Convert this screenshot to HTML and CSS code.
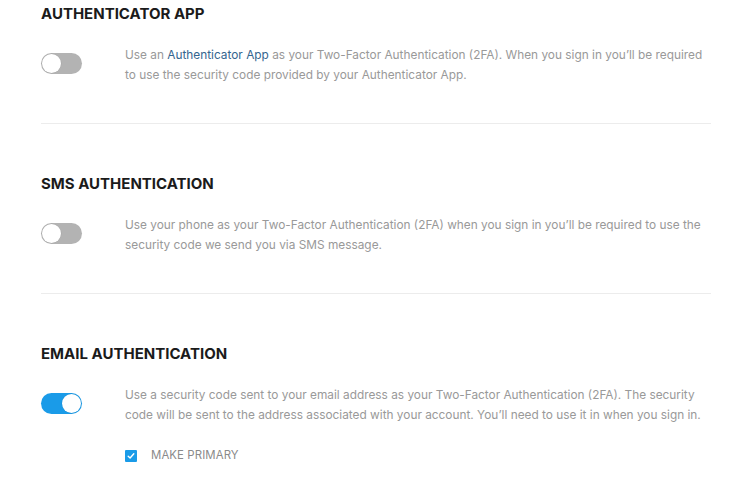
FILE: index.html
```html
<!DOCTYPE html>
<html>
<head>
<meta charset="utf-8">
<link rel="stylesheet" href="styles.css">
</head>
<body>
<div class="page">
  <section class="section">
    <h2 class="title">AUTHENTICATOR APP</h2>
    <div class="row">
      <div class="toggle"><span class="knob"></span></div>
      <p class="desc">Use an <a class="link">Authenticator App</a> as your Two-Factor Authentication (2FA). When you sign in you’ll be required to use the security code provided by your Authenticator App.</p>
    </div>
  </section>
  <div class="divider"></div>
  <section class="section">
    <h2 class="title">SMS AUTHENTICATION</h2>
    <div class="row">
      <div class="toggle"><span class="knob"></span></div>
      <p class="desc">Use your phone as your Two-Factor Authentication (2FA) when you sign in you’ll be required to use the security code we send you via SMS message.</p>
    </div>
  </section>
  <div class="divider"></div>
  <section class="section">
    <h2 class="title">EMAIL AUTHENTICATION</h2>
    <div class="row">
      <div class="toggle on"><span class="knob"></span></div>
      <div class="col">
        <p class="desc">Use a security code sent to your email address as your Two-Factor Authentication (2FA). The security code will be sent to the address associated with your account. You’ll need to use it in when you sign in.</p>
        <label class="check">
          <span class="box"><svg width="8" height="8" viewBox="0 0 8 8"><path d="M1.2 4.2 L3.1 6 L6.8 1.8" fill="none" stroke="#fff" stroke-width="1.4" stroke-linecap="round" stroke-linejoin="round"/></svg></span>
          <span class="check-label">MAKE PRIMARY</span>
        </label>
      </div>
    </div>
  </section>
</div>
</body>
</html>
```
FILE: styles.css
```css
html, body {
  margin: 0;
  padding: 0;
  background: #ffffff;
}
body {
  font-family: Inter, "Noto Sans", sans-serif;
}
.page {
  padding: 4px 30px 0 41px;
}
.section {
  display: flex;
  flex-direction: column;
}
.title {
  margin: 0;
  font-size: 15px;
  line-height: 20px;
  font-weight: 700;
  color: #1b1b1b;
}
.row {
  display: flex;
  align-items: flex-start;
  margin-top: 21px;
}
.toggle {
  width: 41px;
  height: 21px;
  border-radius: 11px;
  background: #b3b3b3;
  position: relative;
  flex: none;
  margin-top: 8px;
}
.toggle .knob {
  position: absolute;
  top: 1px;
  left: 1px;
  width: 19px;
  height: 19px;
  border-radius: 50%;
  background: #fff;
  box-shadow: 0 0 0 0.5px rgba(0, 0, 0, 0.08);
}
.toggle.on {
  background: #1a9be8;
}
.toggle.on .knob {
  left: 21px;
}
.col {
  display: flex;
  flex-direction: column;
}
.desc {
  margin: 0 0 0 43px;
  font-size: 11.85px;
  line-height: 20px;
  color: #999999;
  max-width: 586px;
}
.link {
  color: #34658f;
}
.divider {
  height: 1px;
  background: #ececec;
  margin: 38px 0 50px;
}
.check {
  display: flex;
  align-items: center;
  margin: 23px 0 0 43px;
  gap: 14px;
  line-height: 15px;
}
.box {
  width: 12px;
  height: 12px;
  background: #1a9be8;
  border-radius: 1px;
  display: flex;
  align-items: center;
  justify-content: center;
}
.check-label {
  font-size: 11.4px;
  color: #8a8a8a;
  letter-spacing: 0.1px;
}
```
